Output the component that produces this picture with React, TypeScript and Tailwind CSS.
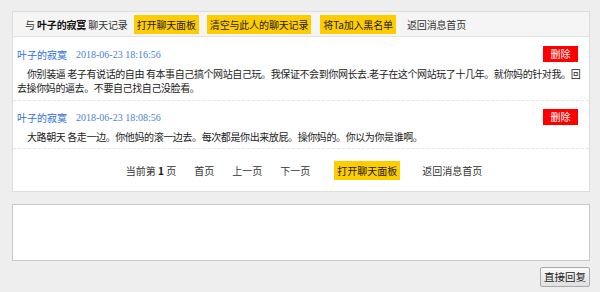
import React from 'react';

type Msg = {
  id: number;
  name: string;
  time: string;
  body: string;
};

const messages: Msg[] = [
  {
    id: 1,
    name: '叶子的寂寞',
    time: '2018-06-23 18:16:56',
    body: '你别装逼 老子有说话的自由 有本事自己搞个网站自己玩。我保证不会到你网长去.老子在这个网站玩了十几年。就你妈的针对我。回去操你妈的逼去。不要自己找自己没脸看。',
  },
  {
    id: 2,
    name: '叶子的寂寞',
    time: '2018-06-23 18:08:56',
    body: '大路朝天 各走一边。你他妈的滚一边去。每次都是你出来放屁。操你妈的。你以为你是谁啊。',
  },
];

const font = { fontFamily: '"Noto Sans CJK SC", "Noto Sans", sans-serif' };

const YellowBtn = ({ children }: { children: React.ReactNode }) => (
  <span className="inline-block bg-[#ffcc00] px-[3px] h-[19px] leading-[19px] text-[#222] cursor-pointer">{children}</span>
);

const App = () => {
  return (
    <div className="w-[600px] h-[292px] bg-[#eeeeee] pt-[11px] px-[12px] text-[10px] text-[#333]" style={font}>
      <section className="border border-[#dddddd] bg-white w-[578px]">
        <header className="h-[25px] bg-[#f5f5f5] border-b border-[#e2e2e2] flex items-center pl-[12px] tracking-[-0.15px]">
          <span>
            与 <b className="text-[#111]">叶子的寂寞</b> 聊天记录
          </span>
          <span className="ml-[6px]">
            <YellowBtn>打开聊天面板</YellowBtn>
          </span>
          <span className="ml-[8px]">
            <YellowBtn>清空与此人的聊天记录</YellowBtn>
          </span>
          <span className="ml-[9px]">
            <YellowBtn>将Ta加入黑名单</YellowBtn>
          </span>
          <span className="ml-[11px]">返回消息首页</span>
        </header>

        {messages.map((m, i) => (
          <article
            key={m.id}
            className={`pl-[4px] border-b border-dashed border-[#e6e6e6] ${i === 0 ? 'pt-[9px] pb-[5px]' : 'pt-[8px] pb-[4px]'}`}
          >
            <div className="flex items-center h-[16px] pr-[11px]">
              <span className="text-[#2f6fd6]">{m.name}</span>
              <span className="ml-[9px] text-[#4a7fd8]" style={{ fontFamily: '"Liberation Serif", serif' }}>
                {m.time}
              </span>
              <button className="ml-auto w-[35px] h-[16px] bg-[#ff0000] text-white text-[10px] leading-[16px]">删除</button>
            </div>
            <p className="mt-[5px] leading-[14px] indent-[10px] text-[#222] tracking-[-0.4px]">{m.body}</p>
          </article>
        ))}

        <nav className="h-[42px] flex items-center justify-center gap-[18px] pl-[6px]">
          <span>
            当前第 <b className="text-[#111]">1</b> 页
          </span>
          <span>首页</span>
          <span>上一页</span>
          <span>下一页</span>
          <span className="ml-[6px]">
            <YellowBtn>打开聊天面板</YellowBtn>
          </span>
          <span className="ml-[4px]">返回消息首页</span>
        </nav>
      </section>

      <textarea className="block mt-[12px] w-[578px] h-[57px] border border-[#c8c8c8] bg-white resize-none outline-none" />

      <div className="flex justify-end mt-[6px] w-[578px]">
        <button className="h-[20px] px-[3px] border border-[#aaaaaa] rounded-[2px] bg-gradient-to-b from-[#fafafa] to-[#e0e0e0] text-[10.5px] text-[#222] leading-[18px]">
          直接回复
        </button>
      </div>
    </div>
  );
};

export default App;
